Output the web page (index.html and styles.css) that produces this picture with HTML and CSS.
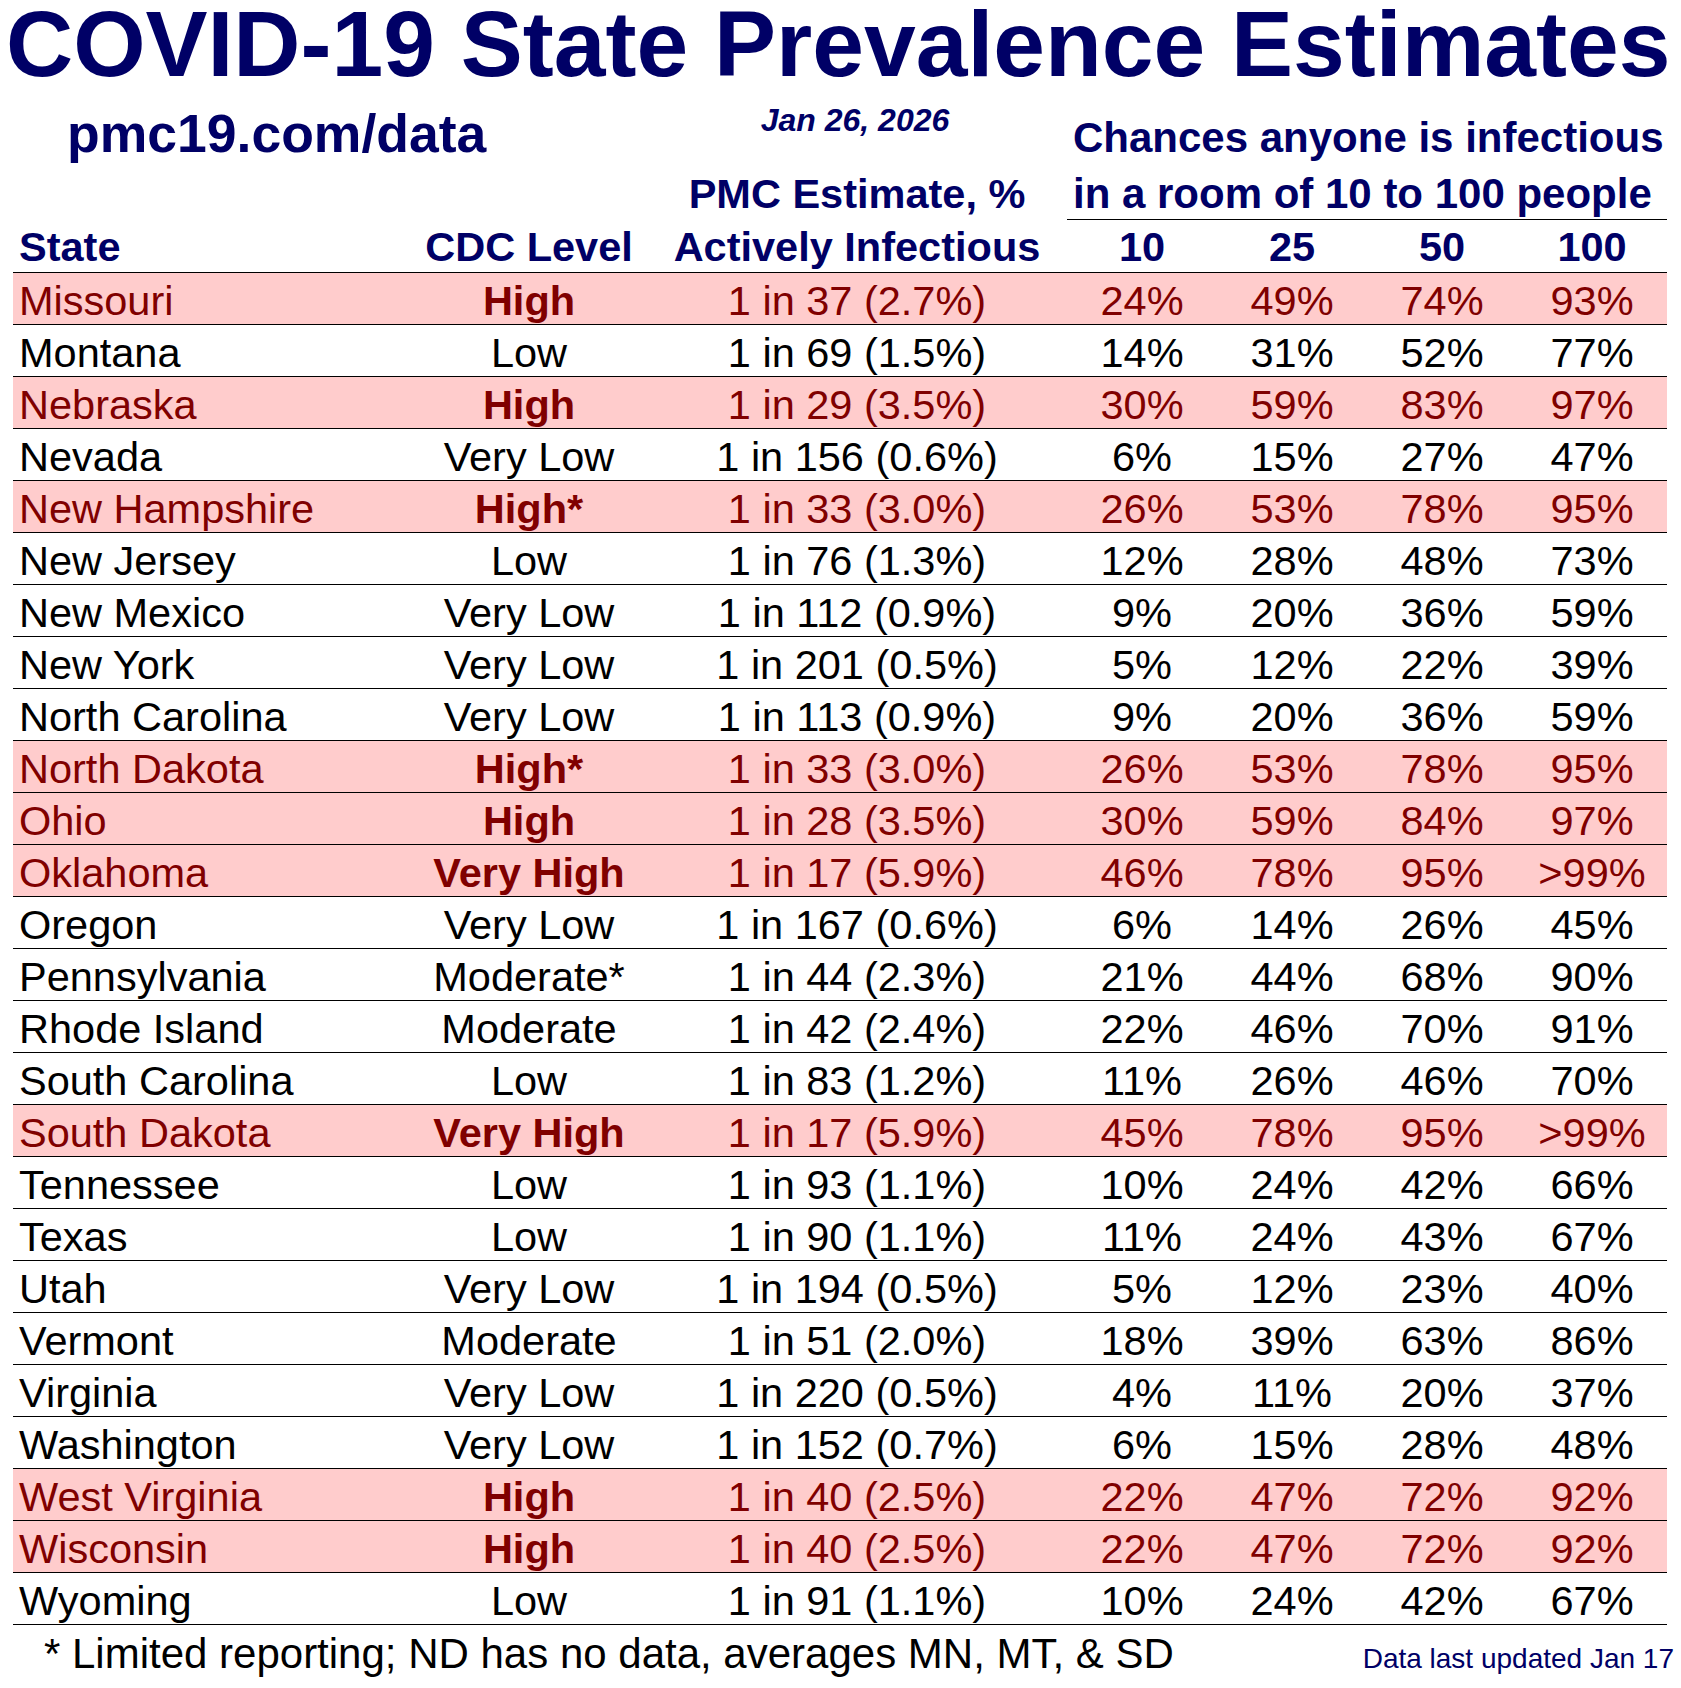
FILE: index.html
```html
<!DOCTYPE html>
<html lang="en">
<head>
<meta charset="utf-8">
<title>COVID-19 State Prevalence Estimates</title>
<link rel="stylesheet" href="styles.css">
</head>
<body>
<h1 class="title">COVID-19 State Prevalence Estimates</h1>
<div class="head">
  <div class="site">pmc19.com/data</div>
  <div class="date">Jan 26, 2026</div>
  <div class="chances">Chances anyone is infectious</div>
  <div class="pmc">PMC Estimate, %</div>
  <div class="room">in a room of 10 to 100 people</div>
  <div class="hc first">State</div>
  <div class="hc">CDC Level</div>
  <div class="hc">Actively Infectious</div>
  <div class="hc">10</div>
  <div class="hc">25</div>
  <div class="hc">50</div>
  <div class="hc">100</div>
</div>
<div class="table">
  <div class="row hi"><span>Missouri</span><span class="lvl">High</span><span>1 in 37 (2.7%)</span><span>24%</span><span>49%</span><span>74%</span><span>93%</span></div>
  <div class="row"><span>Montana</span><span class="lvl">Low</span><span>1 in 69 (1.5%)</span><span>14%</span><span>31%</span><span>52%</span><span>77%</span></div>
  <div class="row hi"><span>Nebraska</span><span class="lvl">High</span><span>1 in 29 (3.5%)</span><span>30%</span><span>59%</span><span>83%</span><span>97%</span></div>
  <div class="row"><span>Nevada</span><span class="lvl">Very Low</span><span>1 in 156 (0.6%)</span><span>6%</span><span>15%</span><span>27%</span><span>47%</span></div>
  <div class="row hi"><span>New Hampshire</span><span class="lvl">High*</span><span>1 in 33 (3.0%)</span><span>26%</span><span>53%</span><span>78%</span><span>95%</span></div>
  <div class="row"><span>New Jersey</span><span class="lvl">Low</span><span>1 in 76 (1.3%)</span><span>12%</span><span>28%</span><span>48%</span><span>73%</span></div>
  <div class="row"><span>New Mexico</span><span class="lvl">Very Low</span><span>1 in 112 (0.9%)</span><span>9%</span><span>20%</span><span>36%</span><span>59%</span></div>
  <div class="row"><span>New York</span><span class="lvl">Very Low</span><span>1 in 201 (0.5%)</span><span>5%</span><span>12%</span><span>22%</span><span>39%</span></div>
  <div class="row"><span>North Carolina</span><span class="lvl">Very Low</span><span>1 in 113 (0.9%)</span><span>9%</span><span>20%</span><span>36%</span><span>59%</span></div>
  <div class="row hi"><span>North Dakota</span><span class="lvl">High*</span><span>1 in 33 (3.0%)</span><span>26%</span><span>53%</span><span>78%</span><span>95%</span></div>
  <div class="row hi"><span>Ohio</span><span class="lvl">High</span><span>1 in 28 (3.5%)</span><span>30%</span><span>59%</span><span>84%</span><span>97%</span></div>
  <div class="row hi"><span>Oklahoma</span><span class="lvl">Very High</span><span>1 in 17 (5.9%)</span><span>46%</span><span>78%</span><span>95%</span><span>&gt;99%</span></div>
  <div class="row"><span>Oregon</span><span class="lvl">Very Low</span><span>1 in 167 (0.6%)</span><span>6%</span><span>14%</span><span>26%</span><span>45%</span></div>
  <div class="row"><span>Pennsylvania</span><span class="lvl">Moderate*</span><span>1 in 44 (2.3%)</span><span>21%</span><span>44%</span><span>68%</span><span>90%</span></div>
  <div class="row"><span>Rhode Island</span><span class="lvl">Moderate</span><span>1 in 42 (2.4%)</span><span>22%</span><span>46%</span><span>70%</span><span>91%</span></div>
  <div class="row"><span>South Carolina</span><span class="lvl">Low</span><span>1 in 83 (1.2%)</span><span>11%</span><span>26%</span><span>46%</span><span>70%</span></div>
  <div class="row hi"><span>South Dakota</span><span class="lvl">Very High</span><span>1 in 17 (5.9%)</span><span>45%</span><span>78%</span><span>95%</span><span>&gt;99%</span></div>
  <div class="row"><span>Tennessee</span><span class="lvl">Low</span><span>1 in 93 (1.1%)</span><span>10%</span><span>24%</span><span>42%</span><span>66%</span></div>
  <div class="row"><span>Texas</span><span class="lvl">Low</span><span>1 in 90 (1.1%)</span><span>11%</span><span>24%</span><span>43%</span><span>67%</span></div>
  <div class="row"><span>Utah</span><span class="lvl">Very Low</span><span>1 in 194 (0.5%)</span><span>5%</span><span>12%</span><span>23%</span><span>40%</span></div>
  <div class="row"><span>Vermont</span><span class="lvl">Moderate</span><span>1 in 51 (2.0%)</span><span>18%</span><span>39%</span><span>63%</span><span>86%</span></div>
  <div class="row"><span>Virginia</span><span class="lvl">Very Low</span><span>1 in 220 (0.5%)</span><span>4%</span><span>11%</span><span>20%</span><span>37%</span></div>
  <div class="row"><span>Washington</span><span class="lvl">Very Low</span><span>1 in 152 (0.7%)</span><span>6%</span><span>15%</span><span>28%</span><span>48%</span></div>
  <div class="row hi"><span>West Virginia</span><span class="lvl">High</span><span>1 in 40 (2.5%)</span><span>22%</span><span>47%</span><span>72%</span><span>92%</span></div>
  <div class="row hi"><span>Wisconsin</span><span class="lvl">High</span><span>1 in 40 (2.5%)</span><span>22%</span><span>47%</span><span>72%</span><span>92%</span></div>
  <div class="row"><span>Wyoming</span><span class="lvl">Low</span><span>1 in 91 (1.1%)</span><span>10%</span><span>24%</span><span>42%</span><span>67%</span></div>
</div>
<div class="foot">
  <div class="note">* Limited reporting; ND has no data, averages MN, MT, &amp; SD</div>
  <div class="updated">Data last updated Jan 17</div>
</div>
</body>
</html>
```
FILE: styles.css
```css
html, body {
  margin: 0;
  padding: 0;
  background: #ffffff;
}

body {
  font-family: "Liberation Sans", Arial, sans-serif;
  color: #000000;
  width: 1681px;
}

.title {
  margin: 0;
  padding-left: 6px;
  height: 88px;
  font-size: 93px;
  line-height: 88px;
  font-weight: 700;
  color: #000066;
  white-space: nowrap;
}

.head {
  margin-left: 13px;
  width: 1654px;
  display: grid;
  grid-template-columns: 398px 236px 420px 150px 150px 150px 150px;
  grid-template-rows: 72px 60px 53px;
  color: #000066;
  font-weight: 700;
}

.site {
  grid-column: 1 / 3;
  grid-row: 1;
  font-size: 53.5px;
  line-height: 60px;
  padding-top: 16px;
  padding-left: 54px;
  white-space: nowrap;
}

.date {
  grid-column: 3;
  grid-row: 1;
  font-size: 32px;
  line-height: 40px;
  padding-top: 12px;
  font-style: italic;
  text-align: center;
  padding-right: 4px;
}

.chances {
  grid-column: 4 / 8;
  grid-row: 1;
  font-size: 42px;
  line-height: 50px;
  padding-top: 25px;
  padding-left: 6px;
  white-space: nowrap;
}

.pmc {
  grid-column: 3;
  grid-row: 2;
  font-size: 41.5px;
  line-height: 50px;
  padding-top: 9px;
  text-align: center;
  white-space: nowrap;
}

.room {
  grid-column: 4 / 8;
  grid-row: 2;
  font-size: 42px;
  line-height: 50px;
  padding-top: 9px;
  padding-left: 6px;
  white-space: nowrap;
  border-bottom: 1px solid #000000;
}

.hc {
  grid-row: 3;
  font-size: 41.5px;
  line-height: 50px;
  padding-top: 2px;
  text-align: center;
  white-space: nowrap;
  border-bottom: 1px solid #000000;
}

.hc.first {
  text-align: left;
  padding-left: 6px;
}

.table {
  margin-left: 13px;
  width: 1654px;
}

.row {
  display: grid;
  grid-template-columns: 398px 236px 420px 150px 150px 150px 150px;
  height: 51px;
  border-bottom: 1px solid #000000;
  font-size: 41.5px;
  line-height: 47px;
  color: #000000;
}

.row span {
  padding-top: 4px;
  text-align: center;
  white-space: nowrap;
}

.row span:first-child {
  text-align: left;
  padding-left: 6px;
}

.row.hi {
  background: #ffcccc;
  color: #800000;
}

.row.hi .lvl {
  font-weight: 700;
}

.foot {
  display: flex;
  justify-content: space-between;
  align-items: baseline;
  padding-left: 44px;
  padding-right: 7px;
  padding-top: 4px;
  white-space: nowrap;
}

.note {
  font-size: 42px;
  line-height: 50px;
  color: #000000;
}

.updated {
  font-size: 28px;
  line-height: 34px;
  color: #000066;
}
```
